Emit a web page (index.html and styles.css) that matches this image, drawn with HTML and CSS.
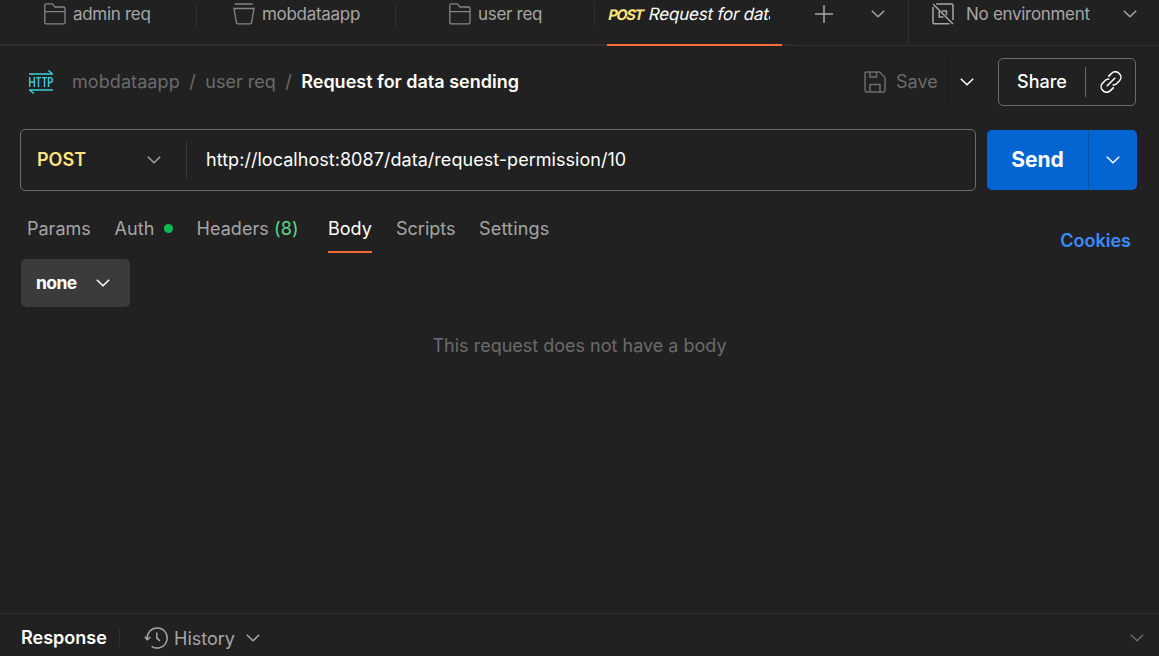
FILE: index.html
```html
<!DOCTYPE html>
<html lang="en">
<head>
<meta charset="utf-8">
<title>Request for data sending</title>
<link rel="stylesheet" href="styles.css">
</head>
<body>
<svg class="defs" width="0" height="0">
  <symbol id="chevron" viewBox="0 0 14 8"><path d="M.8.8 7 6.8 13.2.8"/></symbol>
  <symbol id="folder" viewBox="0 0 22 22"><path d="M.8 19.4V2.2Q.8.8 2.2.8H8.2L11 4H19.6Q21 4 21 5.4V19.4Q21 20.8 19.6 20.8H2.2Q.8 20.8.8 19.4ZM.8 8.6H21"/></symbol>
</svg>
<div class="app">
  <header class="topbar">
    <div class="tab tab-admin"><svg class="icon"><use href="#folder"/></svg><span>admin req</span></div>
    <div class="tab tab-mob"><svg class="icon" viewBox="0 0 22 22"><path d="M1.8 1H19.8M1 5.5H21L18.6 19.6Q18.4 20.8 17.2 20.8H4.8Q3.6 20.8 3.4 19.6Z"/></svg><span>mobdataapp</span></div>
    <div class="tab tab-user"><svg class="icon"><use href="#folder"/></svg><span>user req</span></div>
    <div class="tab tab-active"><div class="active-label"><b>POST</b><div class="active-name"><span>Request for data</span></div></div></div>
    <div class="tab-tools">
      <svg class="plus" viewBox="0 0 18 18"><path d="M9 0V18M0 9H18"/></svg>
      <svg class="chevron"><use href="#chevron"/></svg>
    </div>
    <div class="environment">
      <svg class="icon" viewBox="0 0 22 22"><path d="M4.2 1H19.6Q21 1 21 2.4V17M17.5 20.8H2.4Q1 20.8 1 19.4V4M1 1 21 21M10 8H14.5V12.2M11.5 14H7.2V8.5"/></svg>
      <span>No environment</span>
      <svg class="chevron"><use href="#chevron"/></svg>
    </div>
  </header>

  <section class="request-head">
    <svg class="http" viewBox="0 0 24 24"><path d="M0 4H24M19.5.5 23.5 4M0 20H24M.5 20 5 23.5"/><path class="http-letters" d="M.7 7V17M5.3 7V17M.7 12H5.3M7 7.6H12M9.5 7.6V17M13 7.6H18M15.5 7.6V17M19.5 17V7.6H21.2Q23.3 7.6 23.3 10T21.2 12.5H19.5"/></svg>
    <nav class="crumbs"><span class="c-mob">mobdataapp</span><span class="slash">/</span><span>user req</span><span class="slash">/</span><strong>Request for data sending</strong></nav>
    <div class="save"><svg class="icon" viewBox="0 0 22 22"><path d="M1 2.4Q1 1 2.4 1H15.5L21 6.5V19.6Q21 21 19.6 21H2.4Q1 21 1 19.6ZM6 1V6H12.5V1M6 21V13.5H16V21"/></svg><span>Save</span></div>
    <div class="save-menu"><svg class="chevron"><use href="#chevron"/></svg></div>
    <div class="share"><span>Share</span><i></i><svg class="icon" viewBox="0 0 22 22"><path d="M8.3 5.6 11.5 2.4A5 5 0 0 1 19.4 2.8 5 5 0 0 1 19.5 9.8L16.1 13.2 12.7 14.3M13.7 16.4 10.5 19.6A5 5 0 0 1 2.6 19.2 5 5 0 0 1 2.5 12.2L5.9 8.8 9.3 7.7M6.8 15.2 15.2 6.8"/></svg></div>
  </section>

  <section class="url-row">
    <div class="url-box">
      <div class="method"><b>POST</b><svg class="chevron"><use href="#chevron"/></svg></div>
      <span class="url">http://localhost:8087/data/request-permission/10</span>
    </div>
    <div class="send"><b>Send</b><div class="send-menu"><svg class="chevron"><use href="#chevron"/></svg></div></div>
  </section>

  <nav class="sections">
    <span class="s-params">Params</span>
    <span class="s-auth">Auth<i class="dot"></i></span>
    <span class="s-headers">Headers <em>(8)</em></span>
    <span class="s-body">Body</span>
    <span class="s-scripts">Scripts</span>
    <span class="s-settings">Settings</span>
    <a class="cookies">Cookies</a>
  </nav>

  <main class="body-pane">
    <div class="body-type"><b>none</b><svg class="chevron"><use href="#chevron"/></svg></div>
    <p>This request does not have a body</p>
  </main>

  <footer class="response">
    <b>Response</b><i></i>
    <svg class="history" viewBox="0 0 24 22"><path d="M3.2 12.2A10 10 0 1 1 7.6 19.3M.8 9.6 3.2 12.8 6.4 10.2M12.8 5.5V11.2L16 13.8"/></svg>
    <span>History</span>
    <svg class="chevron"><use href="#chevron"/></svg>
    <svg class="chevron collapse"><use href="#chevron"/></svg>
  </footer>
</div>
</body>
</html>
```

FILE: styles.css
```css
* { box-sizing: border-box; }
body { margin: 0; background: #212121; color: #a6a6a6; font: 18px/28px Inter, sans-serif; }
.defs { display: block; position: absolute; }
svg { flex: none; fill: none; stroke: currentColor; stroke-width: 1.5; }
.icon { width: 22px; height: 22px; }
.chevron { width: 14px; height: 8px; }
.app { display: flex; flex-direction: column; width: 1159px; height: 656px; overflow: hidden; white-space: nowrap; }

.topbar { display: flex; height: 46px; font-size: 17px; letter-spacing: -.3px; }
.tab { position: relative; display: flex; flex: none; align-items: center; height: 46px; padding-bottom: 16px; border-bottom: 2px solid #2e2e2e; }
.tab .icon { margin-right: 7px; color: #858585; stroke-width: 1.3; }
.tab:not(.tab-active)::after { content: ""; position: absolute; right: 0; top: 3px; width: 1px; height: 24px; background: #303030; }
.tab-admin { width: 197px; padding-left: 44px; }
.tab-mob { width: 199px; padding-left: 36px; }
.tab-user { width: 199px; padding-left: 53px; }
.tab-active { width: 199px; padding: 0 12px; align-items: flex-start; }
.active-label { width: 175px; height: 46px; flex: none; border-bottom: 2px solid #ff6c37; color: #fff; display: flex; }
.active-label b { width: 41px; color: #ffe47e; font-size: 14.5px; letter-spacing: -1.3px; line-height: 30px; transform: skewX(-12deg); }
.active-name { width: 122px; height: 28px; overflow: hidden; }
.active-name span { display: inline-block; padding-left: 1px; letter-spacing: -.2px; transform: skewX(-12deg); }
.tab-tools { display: flex; align-items: center; width: 114px; padding: 0 23px 17px 21px; justify-content: space-between; border-bottom: 1px solid #303030; }
.plus { width: 18px; height: 18px; }
.environment { display: flex; flex: 1; align-items: center; padding: 0 22px 17px 23px; border-left: 1px solid #303030; border-bottom: 1px solid #303030; }
.environment span { margin-left: 12px; }
.environment .chevron { margin-left: auto; }

.request-head { display: flex; align-items: center; height: 72px; padding: 0 23px 0 29px; color: #6b6b6b; }
.http { width: 24px; height: 24px; color: #3dcbd8; }
.http-letters { stroke-width: 1.4; }
.crumbs { display: flex; margin-left: 19px; }
.c-mob { letter-spacing: .08px; }
.slash { width: 25.5px; text-align: center; }
.crumbs strong { color: #fff; font-weight: 600; }
.save { display: flex; align-items: center; gap: 10px; width: 85px; height: 48px; margin-left: auto; border-right: 1px solid #191919; }
.save-menu { display: flex; width: 49px; padding-left: 11px; color: #fff; }
.share { display: flex; align-items: center; width: 138px; height: 48px; padding: 0 13px 0 18px; border: 1px solid #6b6b6b; border-radius: 5px; color: #fff; font-weight: 500; }
.share i { width: 1px; height: 30px; margin-left: auto; margin-right: 14px; background: #6b6b6b; }

.url-row { display: flex; align-items: center; gap: 11px; height: 62px; margin: 11px 22px 0 20px; }
.url-box { display: flex; align-items: center; width: 956px; height: 62px; border: 1px solid #6b6b6b; border-radius: 5px; color: #fff; }
.method { display: flex; align-items: center; justify-content: space-between; width: 166px; height: 36px; padding: 0 25px 0 16px; border-right: 1px solid #3b3b3b; color: #a6a6a6; }
.method b { color: #ffe47e; font-weight: 600; }
.url { margin-left: 19px; letter-spacing: .04px; }
.send { display: flex; align-items: center; width: 150px; height: 60px; background: #0265d2; border-radius: 5px; color: #fff; }
.send b { flex: 1; text-align: center; font-size: 21px; font-weight: 650; }
.send-menu { display: flex; align-items: center; justify-content: center; width: 49px; height: 60px; border-left: 1px solid #07509f; }

.sections { display: flex; height: 68px; padding: 24px 28px 0 27px; }
.sections > span { flex: none; height: 38px; }
.s-params { width: 87.5px; }
.s-auth { width: 82px; letter-spacing: .1px; }
.dot { display: inline-block; width: 9px; height: 9px; margin: 0 0 2px 9px; border-radius: 50%; background: #0cbb52; }
.s-headers { width: 131.5px; letter-spacing: .07px; }
.s-headers em { font-style: normal; color: #5ad88f; }
.s-body { width: 44px; margin-right: 24px; color: #fff; border-bottom: 2px solid #f26a38; }
.s-scripts { width: 83px; }
.s-settings { letter-spacing: .2px; }
.cookies { margin: 12px 0 0 auto; height: 28px; color: #3a8cff; font-weight: 600; }

.body-pane { flex: 1; }
.body-type { display: flex; align-items: center; justify-content: space-between; width: 109px; height: 48px; margin-left: 21px; padding: 0 20px 0 15px; border-radius: 5px; background: #3b3b3b; color: #fff; }
.body-type b { font-size: 17.5px; font-weight: 650; letter-spacing: -.6px; }
.body-pane p { margin: 25px 0 0; text-align: center; color: #6b6b6b; }

.response { display: flex; align-items: center; height: 43px; padding: 6px 15px 0 21px; border-top: 1px solid #303030; }
.response b { width: 98px; color: #fff; font-weight: 600; }
.response i { width: 1px; height: 18px; margin-right: 24px; background: #303030; }
.history { width: 24px; height: 22px; margin-right: 6px; }
.response span { width: 72px; padding-top: 1px; }
.collapse { margin-left: auto; color: #6b6b6b; }
```
